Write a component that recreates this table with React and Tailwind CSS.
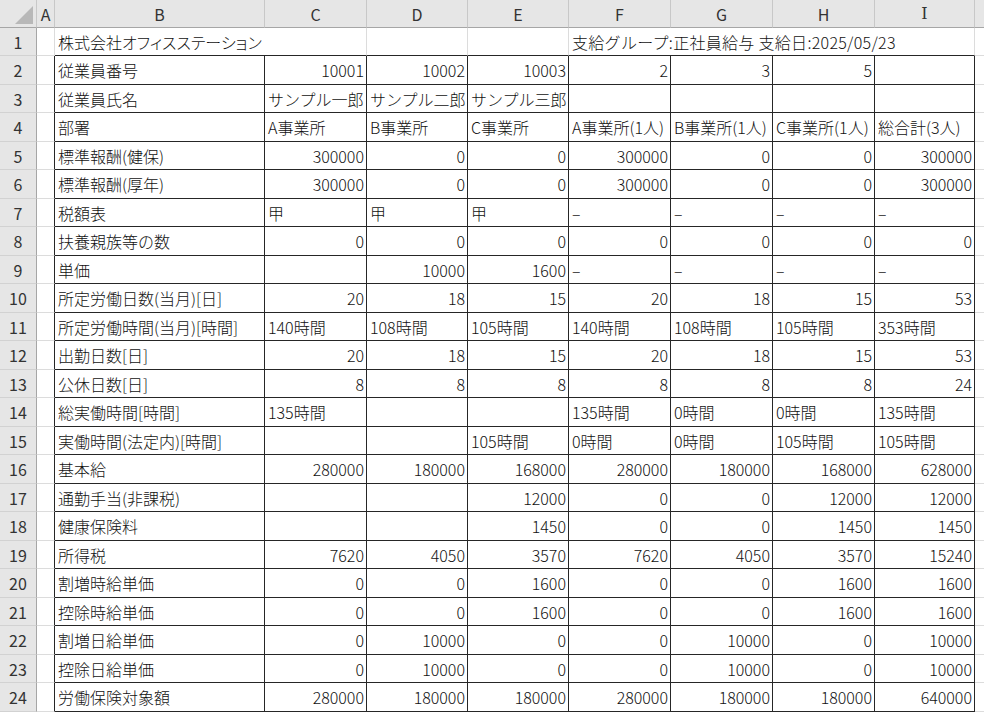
import React from 'react';

// 列幅 (A..I)
const COLS = [
  { key: 'A', w: 'w-[18px]' },
  { key: 'B', w: 'w-[210px]' },
  { key: 'C', w: 'w-[102px]' },
  { key: 'D', w: 'w-[101px]' },
  { key: 'E', w: 'w-[101px]' },
  { key: 'F', w: 'w-[102px]' },
  { key: 'G', w: 'w-[102px]' },
  { key: 'H', w: 'w-[102px]' },
  { key: 'I', w: 'w-[100px]' },
];

const ROWS = [
  ['従業員番号', '10001', '10002', '10003', '2', '3', '5', ''],
  ['従業員氏名', 'サンプル一郎', 'サンプル二郎', 'サンプル三郎', '', '', '', ''],
  ['部署', 'A事業所', 'B事業所', 'C事業所', 'A事業所(1人)', 'B事業所(1人)', 'C事業所(1人)', '総合計(3人)'],
  ['標準報酬(健保)', '300000', '0', '0', '300000', '0', '0', '300000'],
  ['標準報酬(厚年)', '300000', '0', '0', '300000', '0', '0', '300000'],
  ['税額表', '甲', '甲', '甲', '–', '–', '–', '–'],
  ['扶養親族等の数', '0', '0', '0', '0', '0', '0', '0'],
  ['単価', '', '10000', '1600', '–', '–', '–', '–'],
  ['所定労働日数(当月)[日]', '20', '18', '15', '20', '18', '15', '53'],
  ['所定労働時間(当月)[時間]', '140時間', '108時間', '105時間', '140時間', '108時間', '105時間', '353時間'],
  ['出勤日数[日]', '20', '18', '15', '20', '18', '15', '53'],
  ['公休日数[日]', '8', '8', '8', '8', '8', '8', '24'],
  ['総実働時間[時間]', '135時間', '', '', '135時間', '0時間', '0時間', '135時間'],
  ['実働時間(法定内)[時間]', '', '', '105時間', '0時間', '0時間', '105時間', '105時間'],
  ['基本給', '280000', '180000', '168000', '280000', '180000', '168000', '628000'],
  ['通勤手当(非課税)', '', '', '12000', '0', '0', '12000', '12000'],
  ['健康保険料', '', '', '1450', '0', '0', '1450', '1450'],
  ['所得税', '7620', '4050', '3570', '7620', '4050', '3570', '15240'],
  ['割増時給単価', '0', '0', '1600', '0', '0', '1600', '1600'],
  ['控除時給単価', '0', '0', '1600', '0', '0', '1600', '1600'],
  ['割増日給単価', '0', '10000', '0', '0', '10000', '0', '10000'],
  ['控除日給単価', '0', '10000', '0', '0', '10000', '0', '10000'],
  ['労働保険対象額', '280000', '180000', '180000', '280000', '180000', '180000', '640000'],
];

const isNumber = (v) => /^\d+$/.test(v);

const RowHeader = ({ n, h }) => (
  <div className={`w-[37px] ${h} shrink-0 flex items-center justify-center bg-[#e6e6e6] text-[#333] font-normal border-r border-b border-r-[#a6a6a6] border-b-[#d2d2d2]`}>
    {n}
  </div>
);

const Corner = () => (
  <div className="w-[37px] h-[28px] shrink-0 relative bg-[#e6e6e6] border-r border-b border-r-[#c8c8c8] border-b-[#a6a6a6]">
    <svg className="absolute right-[3px] bottom-[3px]" width="18" height="18" viewBox="0 0 18 18">
      <polygon points="18,0 18,18 0,18" fill="#b8b8b8" />
    </svg>
  </div>
);

const ColHeader = ({ label, w, serif }) => (
  <div className={`${w} h-[28px] shrink-0 flex items-center justify-center bg-[#e6e6e6] text-[#333] font-normal border-r border-b border-r-[#c8c8c8] border-b-[#a6a6a6] ${serif ? "font-['DejaVu_Serif']" : ''}`}>
    {label}
  </div>
);

export default function App() {
  return (
    <div className="w-[984px] h-[712px] overflow-hidden bg-white text-[16px] leading-none font-light text-[#111] font-['Noto_Sans_CJK_JP',sans-serif]">
      {/* 列見出し */}
      <div className="flex">
        <Corner />
        {COLS.map((c) => (
          <ColHeader key={c.key} label={c.key} w={c.w} serif={c.key === 'I'} />
        ))}
        <div className="flex-1 h-[28px] bg-[#e6e6e6] border-b border-b-[#a6a6a6]" />
      </div>

      {/* 1行目 */}
      <div className="flex">
        <RowHeader n={1} h="h-[28px]" />
        <div className="w-[18px] h-[28px] shrink-0 border-r border-b border-[#dcdcdc]" />
        <div className="w-[312px] h-[28px] shrink-0 flex items-center px-[3px] whitespace-nowrap border-r border-b border-r-[#dcdcdc] border-b-[#262626] [font-feature-settings:'palt']">
          株式会社オフィスステーション
        </div>
        <div className="w-[101px] h-[28px] shrink-0 border-r border-b border-r-[#dcdcdc] border-b-[#262626]" />
        <div className="w-[101px] h-[28px] shrink-0 border-r border-b border-r-[#dcdcdc] border-b-[#262626]" />
        <div className="w-[406px] h-[28px] shrink-0 flex items-center px-[3px] whitespace-nowrap tracking-[0.3px] border-r border-b border-r-[#dcdcdc] border-b-[#262626]">
          支給グループ:正社員給与 支給日:2025/05/23
        </div>
        <div className="flex-1 h-[28px] border-b border-[#dcdcdc]" />
      </div>

      {/* 表本体 */}
      {ROWS.map((row, i) => {
        const h = i % 2 === 0 ? 'h-[29px]' : 'h-[28px]';
        return (
          <div key={i} className="flex">
            <RowHeader n={i + 2} h={h} />
            <div className={`w-[18px] ${h} shrink-0 border-r border-b border-r-[#262626] border-b-[#dcdcdc]`} />
            {row.map((v, j) => {
              const w = COLS[j + 1].w;
              const right = j > 0 && isNumber(v);
              return (
                <div
                  key={j}
                  className={`${w} ${h} shrink-0 flex items-center whitespace-nowrap overflow-hidden border-r border-b border-[#262626] ${
                    right ? 'justify-end pr-[2px]' : 'justify-start pl-[3px]'
                  }`}
                >
                  {v}
                </div>
              );
            })}
            <div className={`flex-1 ${h} border-b border-[#dcdcdc]`} />
          </div>
        );
      })}
    </div>
  );
}
